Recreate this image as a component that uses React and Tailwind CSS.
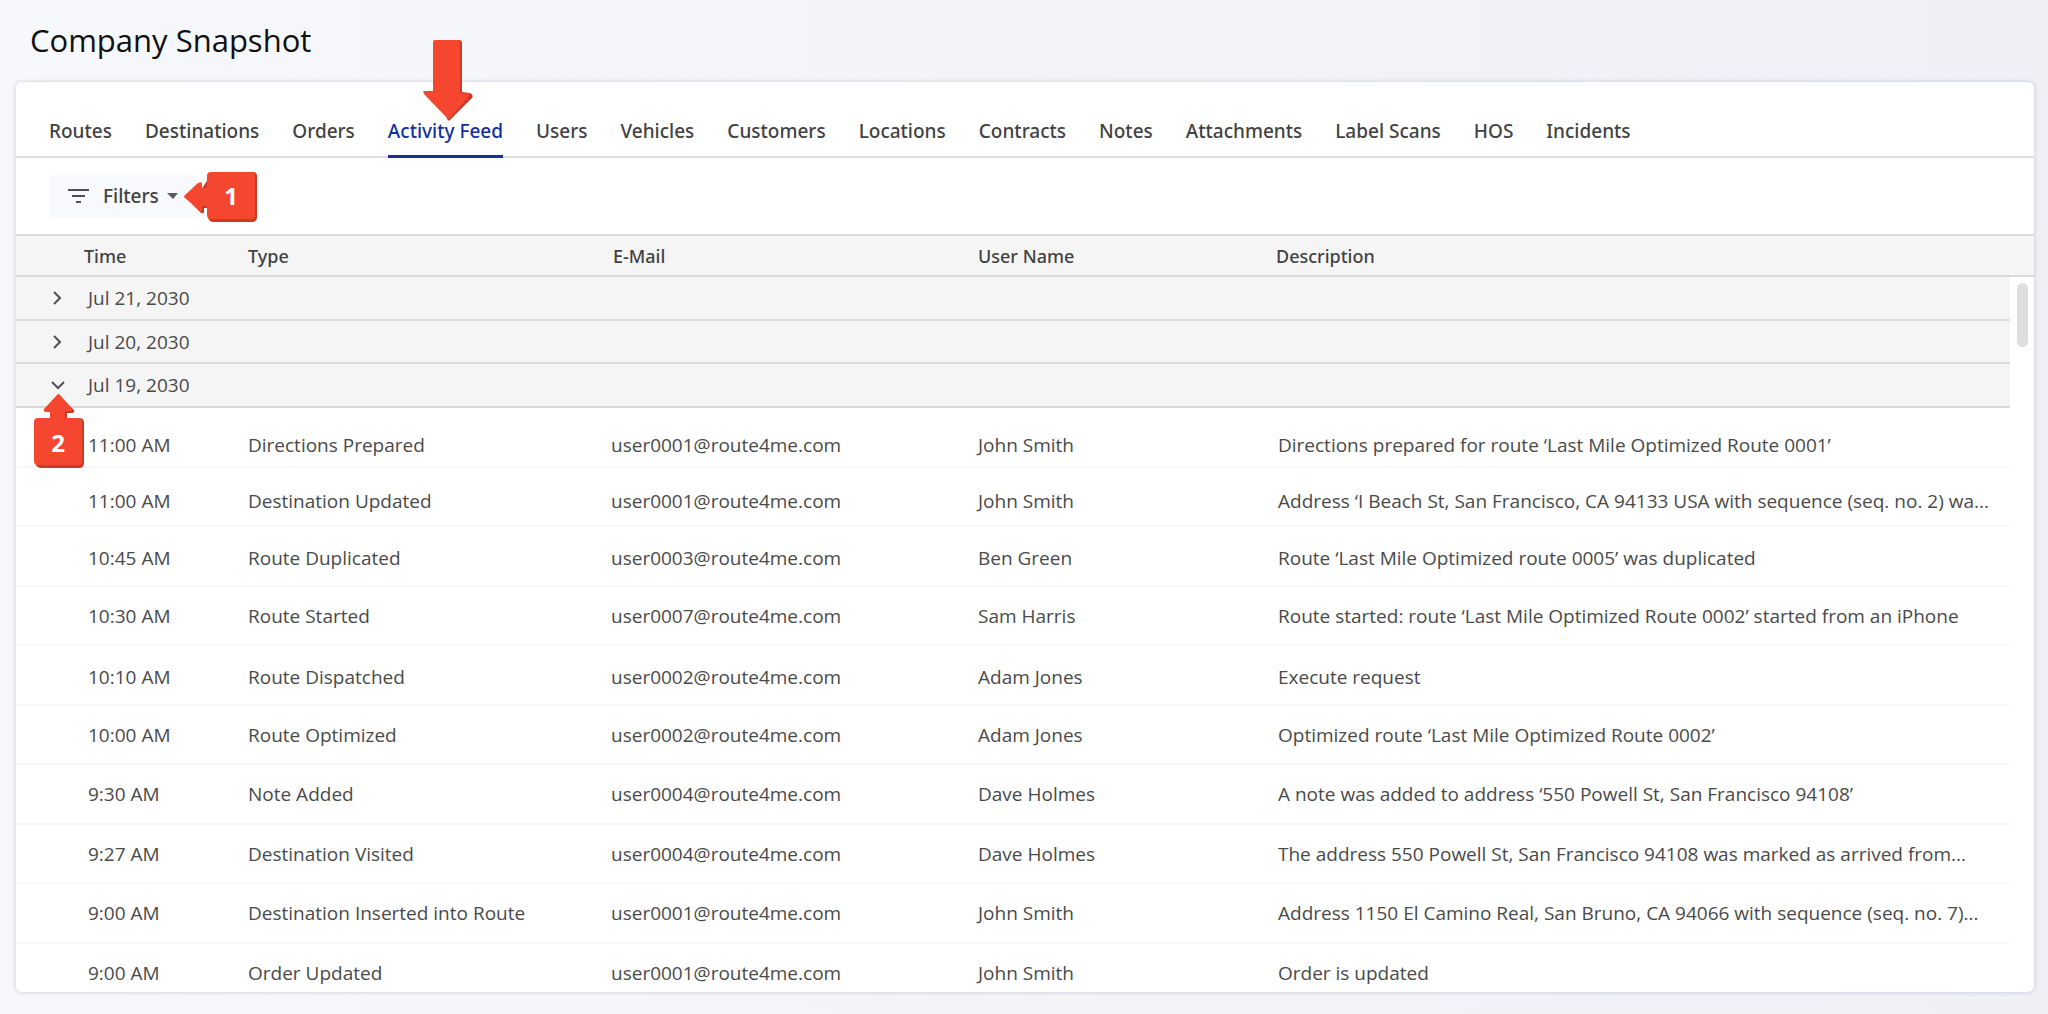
import React from "react";

const TABS = [
  "Routes", "Destinations", "Orders", "Activity Feed", "Users", "Vehicles", "Customers",
  "Locations", "Contracts", "Notes", "Attachments", "Label Scans", "HOS", "Incidents",
];

const GROUPS = [
  { date: "Jul 21, 2030", open: false },
  { date: "Jul 20, 2030", open: false },
  { date: "Jul 19, 2030", open: true },
];

const ROWS = [
  ["11:00 AM", "Directions Prepared", "user0001@route4me.com", "John Smith", "Directions prepared for route ‘Last Mile Optimized Route 0001’", "pt-4"],
  ["11:00 AM", "Destination Updated", "user0001@route4me.com", "John Smith", "Address ‘I Beach St, San Francisco, CA 94133 USA with sequence (seq. no. 2) wa...", "pt-2"],
  ["10:45 AM", "Route Duplicated", "user0003@route4me.com", "Ben Green", "Route ‘Last Mile Optimized route 0005’ was duplicated", "pt-1"],
  ["10:30 AM", "Route Started", "user0007@route4me.com", "Sam Harris", "Route started: route ‘Last Mile Optimized Route 0002’ started from an iPhone", "pt-0"],
  ["10:10 AM", "Route Dispatched", "user0002@route4me.com", "Adam Jones", "Execute request", "pt-1"],
  ["10:00 AM", "Route Optimized", "user0002@route4me.com", "Adam Jones", "Optimized route ‘Last Mile Optimized Route 0002’", "pt-0"],
  ["9:30 AM", "Note Added", "user0004@route4me.com", "Dave Holmes", "A note was added to address ‘550 Powell St, San Francisco 94108’", "pt-0"],
  ["9:27 AM", "Destination Visited", "user0004@route4me.com", "Dave Holmes", "The address 550 Powell St, San Francisco 94108 was marked as arrived from...", "pt-0"],
  ["9:00 AM", "Destination Inserted into Route", "user0001@route4me.com", "John Smith", "Address 1150 El Camino Real, San Bruno, CA 94066 with sequence (seq. no. 7)...", "pt-0"],
  ["9:00 AM", "Order Updated", "user0001@route4me.com", "John Smith", "Order is updated", "pt-0"],
];

function DownArrow() {
  return (
    <svg className="absolute bottom-[34px] left-[35px] h-[82px] w-[50px] max-w-none" viewBox="0 0 50 82" aria-hidden="true">
      <path d="M12 2l24-1q3 0 3 3v49l8 1q4 2 2 5L28 80q-2 3-4 0l5-24 5-50z" fill="#cb3a24" />
      <path d="M12 1h23q2 0 2 2v51h8q3 1 1 3L27 79q-2 2-3 0L1 55q-2-3 1-3h8V3q0-2 2-2z" fill="#f5472f" />
    </svg>
  );
}

function LeftMarker() {
  return (
    <span className="absolute left-[135px] top-[-4px] block h-[51px] w-[73px]">
      <svg className="h-full w-full" viewBox="0 0 73 51" aria-hidden="true">
        <path d="M28 2l41-1q4 0 4 4v41q0 5-5 5H29q-3 0-5-4l-1-10h-3v4q-1 3-4 0L8 33z" fill="#cb3a24" />
        <path d="M27 1h40q4 0 4 4v39q0 4-4 4H27q-4 0-4-4v-9h-5v5q-1 1-3-1L1 27q-2-1 0-3l13-12q4-2 4 1v4h5V5q0-4 4-4z" fill="#f5472f" />
      </svg>
      <span className="absolute inset-y-0 right-0 flex w-[52px] items-center justify-center text-2xl font-bold text-white">1</span>
    </span>
  );
}

function UpMarker() {
  return (
    <span className="absolute left-[18px] top-[29px] z-10 block h-[75px] w-[50px]">
      <svg className="h-full w-full" viewBox="0 0 50 75" aria-hidden="true">
        <path d="M25 2l15 15q1 3-2 3h-5v5h12q5 0 5 5v40q0 5-5 5H6q-4-1-5-5l20-30z" fill="#cb3a24" />
        <path d="M23 2q1-2 3 0l12 14q1 2-1 2h-6v7h13q4 0 4 4v39q0 4-4 4H4q-4 0-4-4V29q0-4 4-4h12v-6h-4q-3 0-2-3z" fill="#f5472f" />
      </svg>
      <span className="absolute bottom-0 left-0 flex h-[51px] w-12 items-center justify-center text-2xl font-bold text-white">2</span>
    </span>
  );
}

function Chevron({ open }) {
  return (
    <svg className="h-5 w-5" viewBox="0 0 20 20" fill="none" stroke="#505050" strokeWidth="2" aria-hidden="true">
      {open ? <path d="M4 7l6 6 6-6" /> : <path d="M6 4l6 6-6 6" />}
    </svg>
  );
}

export default function App() {
  return (
    <div className="flex h-screen flex-col overflow-hidden bg-linear-to-r from-[#f7f8fb] via-[#f3f4f8] to-[#eff0f6] pb-[22px] pl-4 pr-[14px] font-['Open_Sans',sans-serif] text-[#4a4a4a]">
      <h1 className="flex h-20 shrink-0 items-center pl-[14px] text-[31px] leading-none text-[#111111]">Company Snapshot</h1>
      <main className="mt-[2px] flex min-h-0 flex-1 flex-col rounded-md bg-white shadow-[0_0_4px_rgba(60,70,100,0.25)]">
        <nav className="flex h-[76px] shrink-0 items-end gap-[33px] border-b-2 border-[#dfe0e2] pl-[33px] font-['Noto_Sans',sans-serif] text-[19px] leading-7 font-medium text-[#424242]">
          {TABS.map((t) => {
            const active = t === "Activity Feed";
            return (
              <a
                key={t}
                href="#"
                aria-current={active ? "page" : undefined}
                className={
                  active
                    ? "relative -mb-[2px] whitespace-nowrap rounded-t-xs border-b-[3px] border-[#13309f] pb-[10px] text-[#13309f]"
                    : "-mb-[2px] whitespace-nowrap border-b-[3px] border-transparent pb-[10px]"
                }
              >
                {t}
                {active && <DownArrow />}
              </a>
            );
          })}
        </nav>
        <div className="flex h-[76px] shrink-0 items-center pl-[33px]">
          <div className="relative">
            <button type="button" className="flex h-[43px] w-[150px] items-center rounded-md bg-[#f8f9fd] pl-[19px] font-['Noto_Sans',sans-serif] text-[19px] font-medium text-[#424242]">
              <svg className="h-4 w-[21px]" viewBox="0 0 21 16" fill="none" stroke="#505050" strokeWidth="2" aria-hidden="true">
                <path d="M0 2h21M4 8h13M8 14h5" />
              </svg>
              <span className="ml-[14px]">Filters</span>
              <svg className="ml-2 h-[6px] w-[11px]" viewBox="0 0 11 6" aria-hidden="true">
                <path d="M0 0h11L6 6z" fill="#5a5a5a" />
              </svg>
            </button>
            <LeftMarker />
          </div>
        </div>
        <div className="relative min-h-0 flex-1 overflow-hidden rounded-b-md">
          <table className="w-full table-fixed border-separate border-spacing-0 text-left text-[19px] leading-7">
            <colgroup>
              <col className="w-[68px]" />
              <col className="w-[164px]" />
              <col className="w-[363px]" />
              <col className="w-[367px]" />
              <col className="w-[298px]" />
              <col />
              <col className="w-6" />
            </colgroup>
            <thead>
              <tr className="h-[43px] bg-[#f5f5f5] font-['Noto_Sans',sans-serif] text-lg text-[#424242] *:border-y-2 *:border-[#dadada] *:p-0 *:font-medium">
                <th aria-label="Expand" />
                <th scope="col">Time</th>
                <th scope="col">Type</th>
                <th scope="col"><span className="pl-[2px]">E-Mail</span></th>
                <th scope="col">User Name</th>
                <th scope="col">Description</th>
                <th aria-hidden="true" />
              </tr>
            </thead>
            <tbody>
              {GROUPS.map((g) => (
                <tr key={g.date} className="odd:h-11 even:h-[43px]">
                  <td className="relative border-b-2 border-[#dadada] bg-[#f5f5f5] p-0 pl-8">
                    <button type="button" aria-label={"Toggle " + g.date} aria-expanded={g.open} className="block">
                      <Chevron open={g.open} />
                    </button>
                    {g.open && <UpMarker />}
                  </td>
                  <td colSpan={5} className="border-b-2 border-[#dadada] bg-[#f5f5f5] p-0 pl-1">{g.date}</td>
                  <td className="p-0" />
                </tr>
              ))}
            </tbody>
            <tbody>
              {ROWS.map(([time, type, mail, user, text, pad], i) => (
                <tr key={i} className="odd:h-[60px] even:h-[59px] *:border-b-2 *:border-[#f7f7f8] *:whitespace-nowrap *:px-0 *:pb-0 *:last:border-0">
                  <td />
                  <td className={pad}><span className="pl-1">{time}</span></td>
                  <td className={pad}>{type}</td>
                  <td className={pad}>{mail}</td>
                  <td className={pad}>{user}</td>
                  <td className={pad}><span className="block truncate pl-[2px]">{text}</span></td>
                  <td />
                </tr>
              ))}
            </tbody>
          </table>
          <div className="absolute right-[6px] top-[49px] h-16 w-[11px] rounded-full bg-[#dedede]" />
        </div>
      </main>
    </div>
  );
}
